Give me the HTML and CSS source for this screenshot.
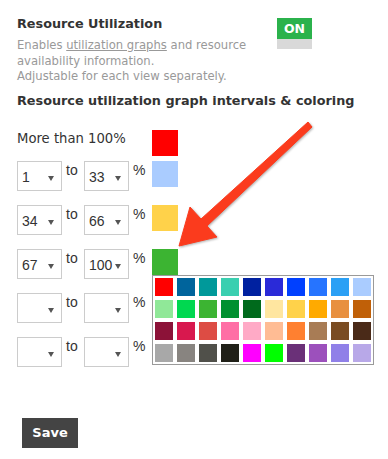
FILE: index.html
```html
<!DOCTYPE html>
<html lang="en">
<head>
<meta charset="utf-8">
<title>Resource Utilization</title>
<link rel="stylesheet" href="styles.css">
</head>
<body>
<div class="page">
  <div class="setting">
    <div class="setting-text">
      <h2 class="title">Resource Utilization</h2>
      <p class="desc">Enables <a href="#" class="desc-link">utilization graphs</a> and resource<br>availability information.<br>Adjustable for each view separately.</p>
    </div>
    <div class="toggle"><span class="toggle-on">ON</span><span class="toggle-off"></span></div>
  </div>

  <h3 class="section-title">Resource utilization graph intervals &amp; coloring</h3>

  <div class="intervals">
    <div class="row row-over">
      <span class="over-label">More than 100%</span>
      <span class="swatch" style="background:#ff0000"></span>
    </div>
    <div class="row row-first">
      <div class="select"><span class="select-value">1</span><span class="caret"></span></div>
      <span class="to">to</span>
      <div class="select"><span class="select-value">33</span><span class="caret"></span></div>
      <span class="pct">%</span>
      <span class="swatch" style="background:#aaccff"></span>
    </div>
    <div class="row">
      <div class="select"><span class="select-value">34</span><span class="caret"></span></div>
      <span class="to">to</span>
      <div class="select"><span class="select-value">66</span><span class="caret"></span></div>
      <span class="pct">%</span>
      <span class="swatch" style="background:#ffd24a"></span>
    </div>
    <div class="row">
      <div class="select"><span class="select-value">67</span><span class="caret"></span></div>
      <span class="to">to</span>
      <div class="select"><span class="select-value">100</span><span class="caret"></span></div>
      <span class="pct">%</span>
      <span class="swatch-wrap">
        <span class="swatch" style="background:#3cb432"></span>
        <span class="palette">
          <span class="cell" style="background:#ff0000"></span>
          <span class="cell" style="background:#00649c"></span>
          <span class="cell" style="background:#00999a"></span>
          <span class="cell" style="background:#3acfb0"></span>
          <span class="cell" style="background:#0021a0"></span>
          <span class="cell" style="background:#2a2ad8"></span>
          <span class="cell" style="background:#0040ff"></span>
          <span class="cell" style="background:#2674ff"></span>
          <span class="cell" style="background:#2ba0f5"></span>
          <span class="cell" style="background:#aaccff"></span>
          <span class="cell" style="background:#90e898"></span>
          <span class="cell" style="background:#00d850"></span>
          <span class="cell" style="background:#3cb432"></span>
          <span class="cell" style="background:#009030"></span>
          <span class="cell" style="background:#006a1c"></span>
          <span class="cell" style="background:#ffe6a0"></span>
          <span class="cell" style="background:#ffd24a"></span>
          <span class="cell" style="background:#ffaa00"></span>
          <span class="cell" style="background:#e89040"></span>
          <span class="cell" style="background:#c06008"></span>
          <span class="cell" style="background:#8c1238"></span>
          <span class="cell" style="background:#d8184e"></span>
          <span class="cell" style="background:#dd4c44"></span>
          <span class="cell" style="background:#ff6ea5"></span>
          <span class="cell" style="background:#ffaac6"></span>
          <span class="cell" style="background:#ffbc94"></span>
          <span class="cell" style="background:#ff8030"></span>
          <span class="cell" style="background:#a87c55"></span>
          <span class="cell" style="background:#7a4c22"></span>
          <span class="cell" style="background:#4a2a18"></span>
          <span class="cell" style="background:#a8a8a8"></span>
          <span class="cell" style="background:#888480"></span>
          <span class="cell" style="background:#50504a"></span>
          <span class="cell" style="background:#202018"></span>
          <span class="cell" style="background:#ff00ff"></span>
          <span class="cell" style="background:#00ff00"></span>
          <span class="cell" style="background:#6a3078"></span>
          <span class="cell" style="background:#9c50bc"></span>
          <span class="cell" style="background:#9080e8"></span>
          <span class="cell" style="background:#b8a8e8"></span>
        </span>
      </span>
    </div>
    <div class="row">
      <div class="select"><span class="select-value"></span><span class="caret"></span></div>
      <span class="to">to</span>
      <div class="select"><span class="select-value"></span><span class="caret"></span></div>
      <span class="pct">%</span>
    </div>
    <div class="row">
      <div class="select"><span class="select-value"></span><span class="caret"></span></div>
      <span class="to">to</span>
      <div class="select"><span class="select-value"></span><span class="caret"></span></div>
      <span class="pct">%</span>
    </div>
  </div>

  <button class="save" type="button">Save</button>

  <svg class="annotation" width="388" height="459" viewBox="0 0 388 459" aria-hidden="true">
    <polygon class="arrow" points="308,122 312,127 207,226 217,237 179,246 190,207 201,219"/>
  </svg>
</div>
</body>
</html>
```

FILE: styles.css
```css
* { box-sizing: border-box; }

html, body {
  margin: 0;
  padding: 0;
  background: #ffffff;
}

body {
  font-family: "DejaVu Sans", "Open Sans", sans-serif;
  color: #333333;
}

.page {
  position: relative;
  width: 388px;
  height: 459px;
  padding: 15px 0 0 17px;
}

.setting {
  display: flex;
  align-items: flex-start;
}

.setting-text {
  width: 260px;
}

.title {
  margin: 0;
  font-size: 12.8px;
  line-height: 18px;
  font-weight: 700;
  color: #333333;
}

.desc {
  margin: 5px 0 0 0;
  font-size: 11.6px;
  line-height: 15.5px;
  color: #999999;
}

.desc-link {
  color: #999999;
  text-decoration: underline;
}

.toggle {
  margin-top: 3px;
  width: 35px;
  display: flex;
  flex-direction: column;
}

.toggle-on {
  height: 21px;
  background: #2bb24c;
  color: #ffffff;
  font-size: 12.5px;
  font-weight: 700;
  line-height: 21px;
  text-align: center;
}

.toggle-off {
  height: 10px;
  background: #d9d9d9;
}

.section-title {
  margin: 7px 0 0 0;
  font-size: 12.8px;
  line-height: 18px;
  font-weight: 700;
  color: #333333;
}

.intervals {
  display: flex;
  flex-direction: column;
}

.row {
  display: flex;
  align-items: flex-start;
  margin-top: 14px;
}

.row-over {
  margin-top: 20px;
}

.row-first {
  margin-top: 5px;
}

.over-label {
  width: 135px;
  font-size: 13.2px;
  line-height: 18px;
  color: #333333;
}

.swatch {
  display: block;
  width: 26px;
  height: 26px;
}

.select {
  position: relative;
  width: 45px;
  height: 30px;
  border: 1px solid #cccccc;
  background: #ffffff;
  font-family: "Liberation Sans", Arial, sans-serif;
  font-size: 14px;
  color: #333333;
  display: flex;
  align-items: center;
  padding-left: 4px;
}

.select-value {
  line-height: 16px;
  padding-top: 2px;
}

.caret {
  position: absolute;
  right: 7px;
  top: 14px;
  width: 0;
  height: 0;
  border-left: 3px solid transparent;
  border-right: 3px solid transparent;
  border-top: 5px solid #555555;
}

.to,
.pct {
  font-family: "Liberation Sans", Arial, sans-serif;
  font-size: 14px;
  line-height: 18px;
  color: #333333;
}

.to {
  width: 22px;
  padding-left: 4px;
}

.pct {
  width: 23px;
  padding-left: 4px;
}

.swatch-wrap {
  position: relative;
  display: block;
}

.palette {
  position: absolute;
  left: 0;
  top: 26px;
  width: 222px;
  display: flex;
  flex-wrap: wrap;
  border: 1px solid #9a9a9a;
  background: #ffffff;
  padding: 0;
  z-index: 2;
}

.cell {
  display: block;
  width: 18px;
  height: 18px;
  margin: 2px;
}

.save {
  margin: 51px 0 0 5px;
  width: 56px;
  height: 30px;
  border: none;
  background: #444444;
  color: #ffffff;
  font-family: "DejaVu Sans", "Open Sans", sans-serif;
  font-size: 13px;
  font-weight: 700;
  padding: 0;
  display: block;
}

.annotation {
  position: absolute;
  left: 0;
  top: 0;
  pointer-events: none;
  z-index: 3;
  filter: drop-shadow(1px 1px 1px rgba(0, 0, 0, 0.3));
}

.arrow {
  fill: #fb3b1d;
  stroke: #fb3b1d;
  stroke-width: 1;
  stroke-linejoin: round;
}
```
